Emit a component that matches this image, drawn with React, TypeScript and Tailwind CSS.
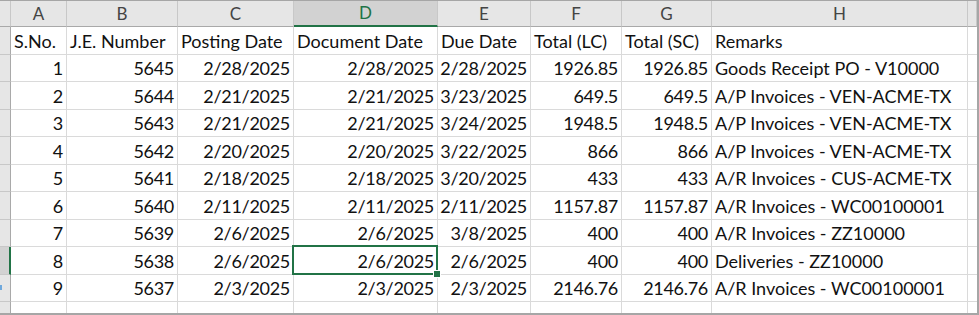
import React from 'react'

const cols = ['A', 'B', 'C', 'D', 'E', 'F', 'G', 'H']

const header = ['S.No.', 'J.E. Number', 'Posting Date', 'Document Date', 'Due Date', 'Total (LC)', 'Total (SC)', 'Remarks']

const rows: string[][] = [
    ['1', '5645', '2/28/2025', '2/28/2025', '2/28/2025', '1926.85', '1926.85', 'Goods Receipt PO - V10000'],
    ['2', '5644', '2/21/2025', '2/21/2025', '3/23/2025', '649.5', '649.5', 'A/P Invoices - VEN-ACME-TX'],
    ['3', '5643', '2/21/2025', '2/21/2025', '3/24/2025', '1948.5', '1948.5', 'A/P Invoices - VEN-ACME-TX'],
    ['4', '5642', '2/20/2025', '2/20/2025', '3/22/2025', '866', '866', 'A/P Invoices - VEN-ACME-TX'],
    ['5', '5641', '2/18/2025', '2/18/2025', '3/20/2025', '433', '433', 'A/R Invoices - CUS-ACME-TX'],
    ['6', '5640', '2/11/2025', '2/11/2025', '2/11/2025', '1157.87', '1157.87', 'A/R Invoices - WC00100001'],
    ['7', '5639', '2/6/2025', '2/6/2025', '3/8/2025', '400', '400', 'A/R Invoices - ZZ10000'],
    ['8', '5638', '2/6/2025', '2/6/2025', '2/6/2025', '400', '400', 'Deliveries - ZZ10000'],
    ['9', '5637', '2/3/2025', '2/3/2025', '2/3/2025', '2146.76', '2146.76', 'A/R Invoices - WC00100001'],
]

const cell = "flex items-end pb-[3px] px-[3px] border-r border-b border-[#dadada] whitespace-nowrap overflow-visible leading-[20px]"
const strip = "bg-[#e6e6e6] border-r border-b border-r-[#a9a9a9] border-b-[#c8c8c8]"

export default function App() {
    return (
        <div className="w-[979px] h-[315px] overflow-hidden bg-white border-t border-r-2 border-b-2 border-[#a6a6a6] text-[18px] text-[#111]" style={{ fontFamily: 'Lato, "Open Sans", sans-serif' }}>
            <div className="grid grid-cols-[11px_56px_111px_116px_144px_93px_91px_90px_256px_9px] grid-rows-[26px_28px_27px_28px_27px_28px_27px_28px_27px_28px_27px_11px]">
                {/* column letters */}
                <div className="bg-[#e6e6e6] border-r border-b border-r-[#c8c8c8] border-b-[#a9a9a9]" />
                {cols.map(c => (
                    <div key={c} className={c === 'D'
                        ? "flex items-center justify-center text-[17px] bg-[#d2d2d2] border-r border-r-[#c8c8c8] border-b-2 border-b-[#217346] text-[#217346]"
                        : "flex items-center justify-center text-[17px] bg-[#e6e6e6] border-r border-b border-r-[#c8c8c8] border-b-[#a9a9a9] text-[#444]"}>
                        {c}
                    </div>
                ))}
                <div className="bg-[#e6e6e6] border-r border-b border-r-[#c8c8c8] border-b-[#a9a9a9]" />

                {/* header row */}
                <div className={strip} />
                {header.map(h => (
                    <div key={h} className={cell}>{h}</div>
                ))}
                <div className="border-b border-[#dadada]" />

                {rows.map((r, ri) => (
                    <React.Fragment key={ri}>
                        <div className={ri === 7 ? "relative bg-[#d2d2d2] border-b border-b-[#c8c8c8] border-r-2 border-r-[#217346]" : `${strip} relative`}>
                            {ri === 8 && <div className="absolute left-0 top-[10px] w-[2px] h-[5px] bg-[#6fa8dc]" />}
                        </div>
                        {r.map((v, ci) => (
                            <div key={ci} className={`${cell} ${ci === 7 ? '' : 'justify-end tracking-[-0.3px]'} ${ri === 7 && ci === 3 ? 'relative' : ''}`}>
                                {v}
                                {ri === 7 && ci === 3 && (
                                    <>
                                        <div className="absolute -left-[2px] -top-[2px] -right-[1px] -bottom-[1px] border-2 border-[#217346]" />
                                        <div className="absolute -right-[4px] -bottom-[4px] w-[8px] h-[8px] bg-[#217346] border border-white" />
                                    </>
                                )}
                            </div>
                        ))}
                        <div className="border-b border-[#dadada]" />
                    </React.Fragment>
                ))}

                {/* trailing partial row */}
                <div className="bg-[#e6e6e6] border-r border-r-[#a9a9a9]" />
                {cols.map(c => (
                    <div key={c} className="border-r border-[#dadada]" />
                ))}
                <div />
            </div>
        </div>
    )
}
